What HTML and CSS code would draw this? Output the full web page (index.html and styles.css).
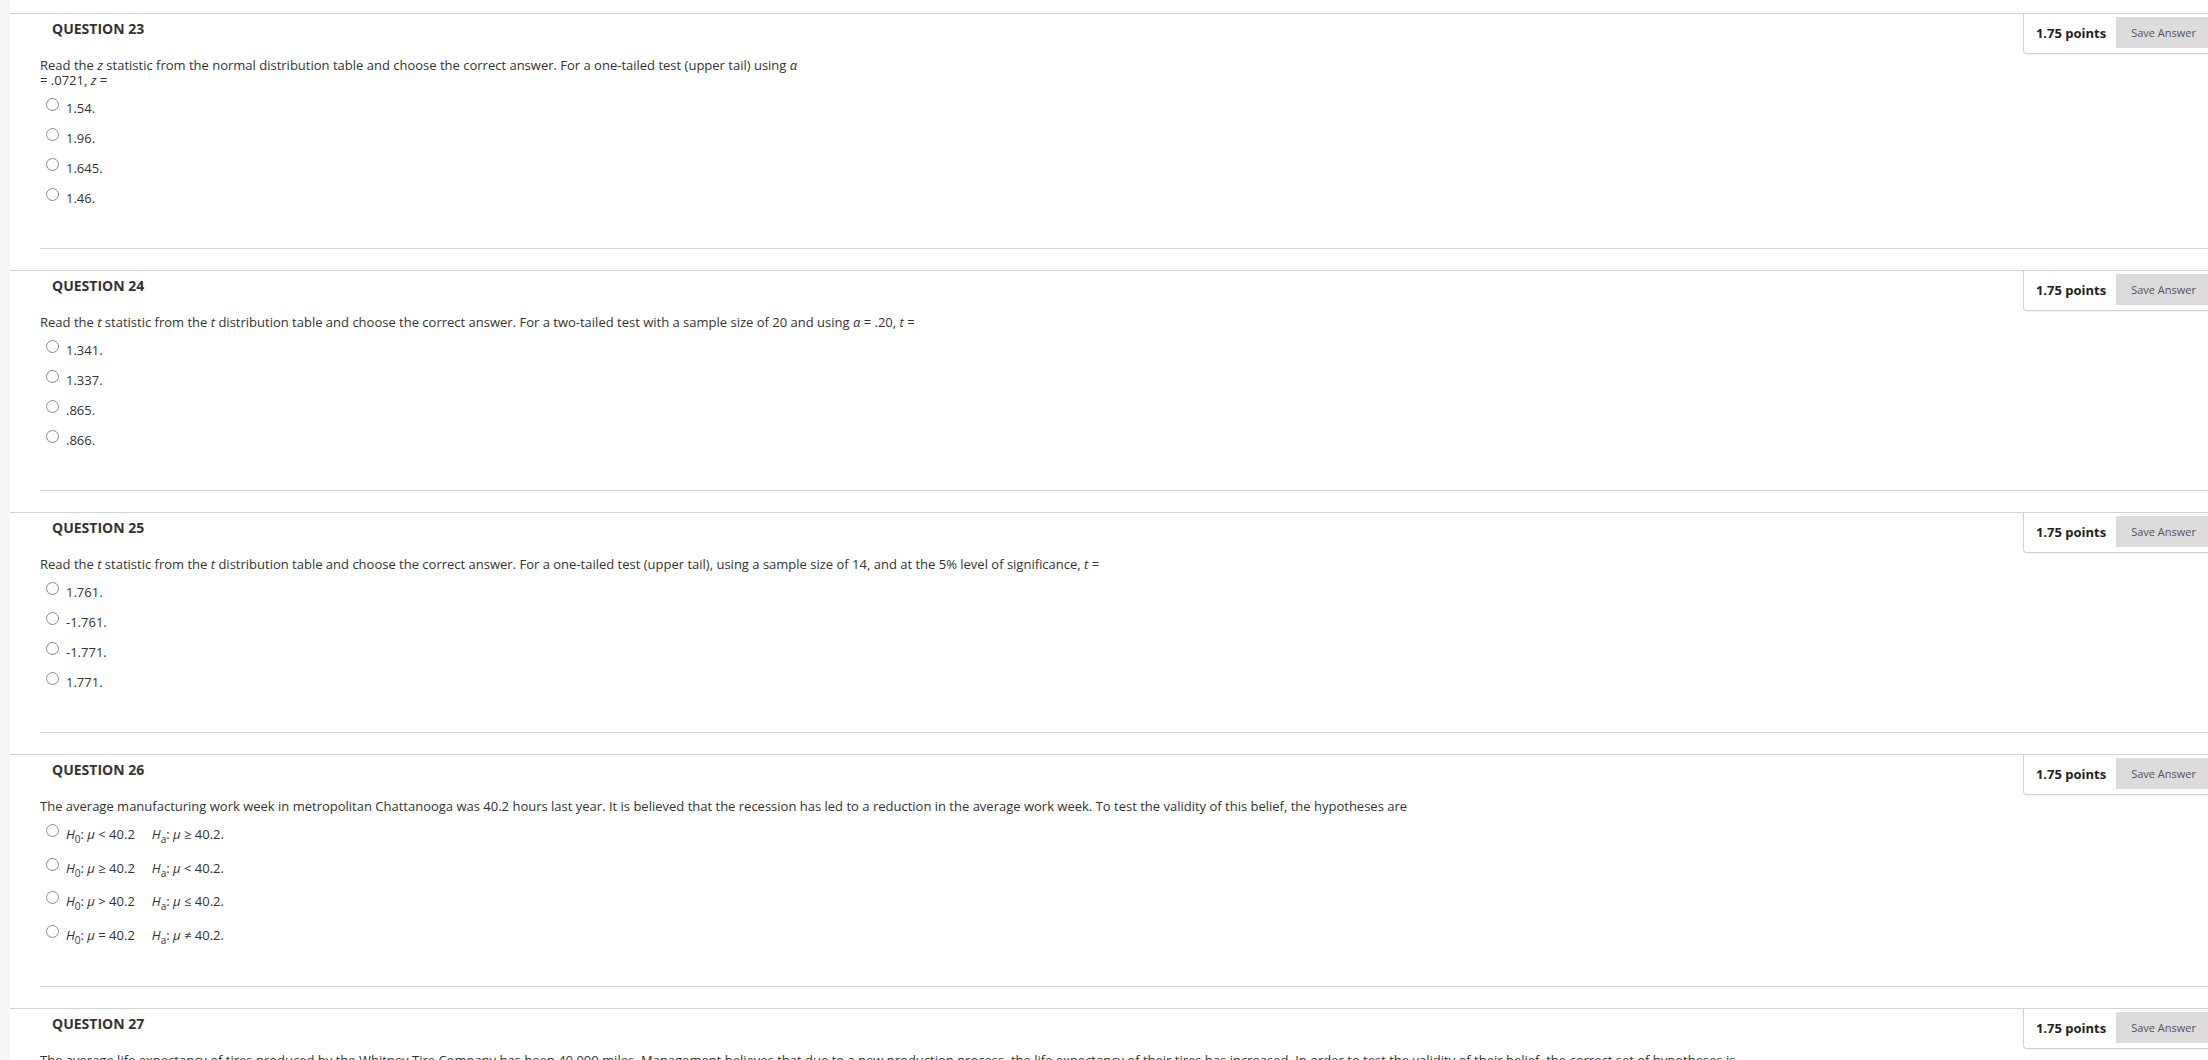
FILE: index.html
```html
<!DOCTYPE html>
<html>
<head>
	<title>Test</title>
	<link rel="stylesheet" href="styles.css">
</head>
<body>
	<div id="content">

		<!-- ######## Question 23 ######## -->
		<div class="question">
			<div class="qhead">
				<h3>QUESTION 23</h3>
				<div class="points"><b>1.75 points</b><button class="save">Save Answer</button></div>
			</div>
			<p class="qtext">Read the <i>z</i> statistic from the normal distribution table and choose the correct answer. For a one-tailed test (upper tail) using <i>&alpha;</i><br>= .0721, <i>z</i> =</p>
			<ul class="opts">
				<li><span class="radio"></span><label>1.54.</label></li>
				<li><span class="radio"></span><label>1.96.</label></li>
				<li><span class="radio"></span><label>1.645.</label></li>
				<li><span class="radio"></span><label>1.46.</label></li>
			</ul>
			<hr>
		</div>

		<!-- ######## Question 24 ######## -->
		<div class="question">
			<div class="qhead">
				<h3>QUESTION 24</h3>
				<div class="points"><b>1.75 points</b><button class="save">Save Answer</button></div>
			</div>
			<p class="qtext">Read the <i>t</i> statistic from the <i>t</i> distribution table and choose the correct answer. For a two-tailed test with a sample size of 20 and using <i>&alpha;</i> = .20, <i>t</i> =</p>
			<ul class="opts">
				<li><span class="radio"></span><label>1.341.</label></li>
				<li><span class="radio"></span><label>1.337.</label></li>
				<li><span class="radio"></span><label>.865.</label></li>
				<li><span class="radio"></span><label>.866.</label></li>
			</ul>
			<hr>
		</div>

		<!-- ######## Question 25 ######## -->
		<div class="question">
			<div class="qhead">
				<h3>QUESTION 25</h3>
				<div class="points"><b>1.75 points</b><button class="save">Save Answer</button></div>
			</div>
			<p class="qtext">Read the <i>t</i> statistic from the <i>t</i> distribution table and choose the correct answer. For a one-tailed test (upper tail), using a sample size of 14, and at the 5% level of significance, <i>t</i> =</p>
			<ul class="opts">
				<li><span class="radio"></span><label>1.761.</label></li>
				<li><span class="radio"></span><label>-1.761.</label></li>
				<li><span class="radio"></span><label>-1.771.</label></li>
				<li><span class="radio"></span><label>1.771.</label></li>
			</ul>
			<hr>
		</div>

		<!-- ######## Question 26 ######## -->
		<div class="question">
			<div class="qhead">
				<h3>QUESTION 26</h3>
				<div class="points"><b>1.75 points</b><button class="save">Save Answer</button></div>
			</div>
			<p class="qtext">The average manufacturing work week in metropolitan Chattanooga was 40.2 hours last year. It is believed that the recession has led to a reduction in the average work week. To test the validity of this belief, the hypotheses are</p>
			<ul class="opts hyp">
				<li><span class="radio"></span><label><i>H</i><sub>0</sub>: <i>&mu;</i> &lt; 40.2<span class="ha"><i>H</i><sub>a</sub>: <i>&mu;</i> &ge; 40.2.</span></label></li>
				<li><span class="radio"></span><label><i>H</i><sub>0</sub>: <i>&mu;</i> &ge; 40.2<span class="ha"><i>H</i><sub>a</sub>: <i>&mu;</i> &lt; 40.2.</span></label></li>
				<li><span class="radio"></span><label><i>H</i><sub>0</sub>: <i>&mu;</i> &gt; 40.2<span class="ha"><i>H</i><sub>a</sub>: <i>&mu;</i> &le; 40.2.</span></label></li>
				<li><span class="radio"></span><label><i>H</i><sub>0</sub>: <i>&mu;</i> = 40.2<span class="ha"><i>H</i><sub>a</sub>: <i>&mu;</i> &ne; 40.2.</span></label></li>
			</ul>
			<hr>
		</div>

		<!-- ######## Question 27 ######## -->
		<div class="question">
			<div class="qhead">
				<h3>QUESTION 27</h3>
				<div class="points"><b>1.75 points</b><button class="save">Save Answer</button></div>
			</div>
			<p class="qtext">The average life expectancy of tires produced by the Whitney Tire Company has been 40,000 miles. Management believes that due to a new production process, the life expectancy of their tires has increased. In order to test the validity of their belief, the correct set of hypotheses is</p>
		</div>

	</div>
</body>
</html>
```

FILE: styles.css
```css
body{margin:0; background:#f6f6f6; font-family:"Open Sans", sans-serif; color:#333;}
#content{margin-left:10px; padding-top:13px; background:white; min-height:100vh;}

.question{border-top:1px solid #d2d2d2;}
.qhead{display:flex; justify-content:space-between; align-items:flex-start;}
.qhead h3{margin:0; padding:5px 0 0 42px; font-size:14px; line-height:20px; font-weight:bold; color:#333;}

.points{
	display:flex; align-items:center; gap:10px;
	padding:3px 0 5px 12px;
	border-left:1px solid #d2d2d2;
	border-bottom:1px solid #d2d2d2;
	border-bottom-left-radius:4px;
	box-shadow:0 1px 2px rgba(0,0,0,0.06);
	font-size:13px; color:#222;
}
.save{
	height:31px; padding:0 12px 0 15px;
	border:0; background:#dcdcdc; color:#555;
	font-family:"Open Sans", sans-serif; font-size:11px;
}

.qtext{margin:4px 0 0; padding-left:30px; font-size:13px; line-height:15px;}
.opts{list-style:none; margin:10px 0 0; padding-left:36px; font-size:13px; line-height:15px; display:flex; flex-direction:column; gap:12px;}
.opts li{display:flex; align-items:flex-start;}
.opts label{padding-top:3px; margin-left:7px;}
.opts sub{font-size:10px; line-height:1;}
.hyp{gap:14px; margin-bottom:5px;}
.ha{margin-left:17px;}
.radio{
	flex:none; width:13px; height:13px; box-sizing:border-box;
	border:1px solid #8c8c8c; border-radius:50%;
	background:radial-gradient(circle at 50% 40%, #fff 55%, #eee);
}

.question hr{height:0; border:0; border-top:1px solid #d2d2d2; margin:42px 0 21px 30px;}
```
